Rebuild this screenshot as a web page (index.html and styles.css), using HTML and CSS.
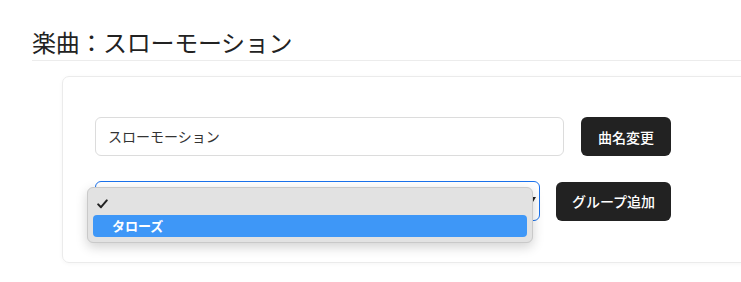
FILE: index.html
```html
<!DOCTYPE html>
<html lang="ja">
<head>
<meta charset="utf-8">
<link rel="stylesheet" href="styles.css">
</head>
<body>
<div class="page">
  <h1 class="title">楽曲：スローモーション</h1>
  <div class="card">
    <div class="row row-name">
      <div class="input">スローモーション</div>
      <button class="btn btn-rename">曲名変更</button>
    </div>
    <div class="row row-group">
      <div class="select">
        <span class="arrow"></span>
        <div class="popup">
          <div class="opt opt-empty">
            <svg class="check" width="11" height="10" viewBox="0 0 11 10"><path d="M1.2 5.4 L4 8.2 L9.8 1.4" fill="none" stroke="#222" stroke-width="2" stroke-linecap="round" stroke-linejoin="round"/></svg>
          </div>
          <div class="opt opt-active">タローズ</div>
        </div>
      </div>
      <button class="btn btn-add">グループ追加</button>
    </div>
  </div>
</div>
</body>
</html>
```
FILE: styles.css
```css
html, body {
  margin: 0;
  padding: 0;
  background: #fff;
}
body {
  font-family: "Noto Sans CJK JP", "Noto Sans", sans-serif;
  color: #222;
}
.page {
  padding-left: 32px;
  overflow: hidden;
  padding-bottom: 10px;
}
.title {
  margin: 27px 0 0 0;
  font-size: 24px;
  font-weight: 400;
  line-height: 30px;
  padding-bottom: 3px;
  border-bottom: 1px solid #ececec;
  letter-spacing: -0.3px;
}
.card {
  margin: 15px -40px 0 30px;
  border: 1px solid #ebebeb;
  border-radius: 7px;
  box-shadow: 0 1px 4px rgba(0,0,0,0.04);
  padding: 40px 0 41px 32px;
}
.row {
  display: flex;
  align-items: center;
}
.row-group {
  margin-top: 25px;
}
.input {
  box-sizing: border-box;
  width: 469px;
  height: 39px;
  border: 1px solid #dcdcdc;
  border-radius: 6px;
  padding: 0 12px;
  font-size: 14px;
  line-height: 37px;
  color: #333;
}
.btn {
  box-sizing: border-box;
  height: 39px;
  border: none;
  border-radius: 6px;
  background: #222;
  color: #fff;
  font-family: "Noto Sans CJK JP", "Noto Sans", sans-serif;
  font-size: 14px;
  font-weight: 500;
  padding: 0;
}
.btn-rename {
  width: 90px;
  margin-left: 17px;
}
.btn-add {
  width: 115px;
  margin-left: 16px;
}
.select {
  position: relative;
  box-sizing: border-box;
  width: 445px;
  height: 40px;
  border: 1px solid #1b72ec;
  border-radius: 6px;
  background: #fff;
}
.arrow {
  position: absolute;
  right: 3px;
  top: 15px;
  width: 0;
  height: 0;
  border-left: 3px solid transparent;
  border-right: 3px solid transparent;
  border-top: 5px solid #222;
}
.popup {
  position: absolute;
  left: -9px;
  top: 5px;
  box-sizing: border-box;
  width: 446px;
  height: 56px;
  background: #e2e2e2;
  border: 1px solid #c9c9c9;
  border-radius: 6px;
  box-shadow: 0 4px 12px rgba(0,0,0,0.18);
  padding: 4px 5px;
}
.opt {
  height: 22px;
  line-height: 22px;
  font-size: 13px;
  font-weight: 700;
  border-radius: 4px;
  padding-left: 19px;
}
.opt-empty {
  position: relative;
  margin-bottom: 1px;
}
.check {
  position: absolute;
  left: 4px;
  top: 7px;
}
.opt-active {
  background: #3e97f7;
  color: #fff;
}
```
